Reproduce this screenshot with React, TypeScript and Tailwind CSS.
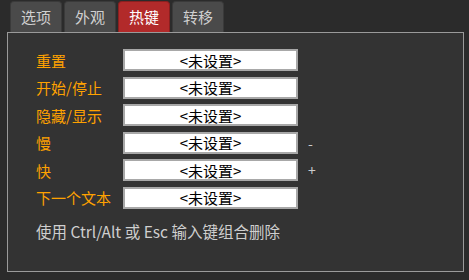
import React from "react";

const rows: { label: string; sign?: string }[] = [
  { label: "重置" },
  { label: "开始/停止" },
  { label: "隐藏/显示" },
  { label: "慢", sign: "-" },
  { label: "快", sign: "+" },
  { label: "下一个文本" },
];

const tabs = ["选项", "外观", "热键", "转移"];

export default function App() {
  return (
    <div
      className="w-[469px] h-[280px] bg-[#2b2b2b] overflow-hidden"
      style={{ fontFamily: '"Noto Sans CJK SC", "Noto Sans", sans-serif' }}
    >
      <div className="flex gap-[2px] pl-[10px] pt-[1px]">
        {tabs.map((t) => (
          <div
            key={t}
            className={
              t === "热键"
                ? "w-[52px] h-[31px] rounded-t-[4px] bg-[#b22a2a] border border-[#8a1f1f] border-b-0 flex items-center justify-center text-white text-[15px]"
                : "w-[52px] h-[31px] rounded-t-[4px] bg-[#4a4a4a] border border-[#3a3a3a] border-b-0 flex items-center justify-center text-[#d0d0d0] text-[15px]"
            }
          >
            {t}
          </div>
        ))}
      </div>
      <div className="ml-[7px] w-[457px] h-[240px] bg-[#333333] border border-[#9a9a9a] pl-[28px] pt-[16px]">
        <div className="flex flex-col gap-[5.5px]">
          {rows.map((r) => (
            <div key={r.label} className="flex items-center h-[22px]">
              <div className="w-[87px] text-[15px] text-[#ffa200] leading-none">{r.label}</div>
              <div className="w-[175px] h-[22px] bg-white border-2 border-[#a8a8a8] flex items-center justify-center text-[15px] text-black leading-none">
                &lt;未设置&gt;
              </div>
              {r.sign && (
                <div className="ml-[10px] text-[14px] text-[#cccccc] leading-none">{r.sign}</div>
              )}
            </div>
          ))}
        </div>
        <div className="mt-[12px] text-[15.5px] text-[#cfcfcf] leading-[20px]">
          使用 Ctrl/Alt 或 Esc 输入键组合删除
        </div>
      </div>
    </div>
  );
}
